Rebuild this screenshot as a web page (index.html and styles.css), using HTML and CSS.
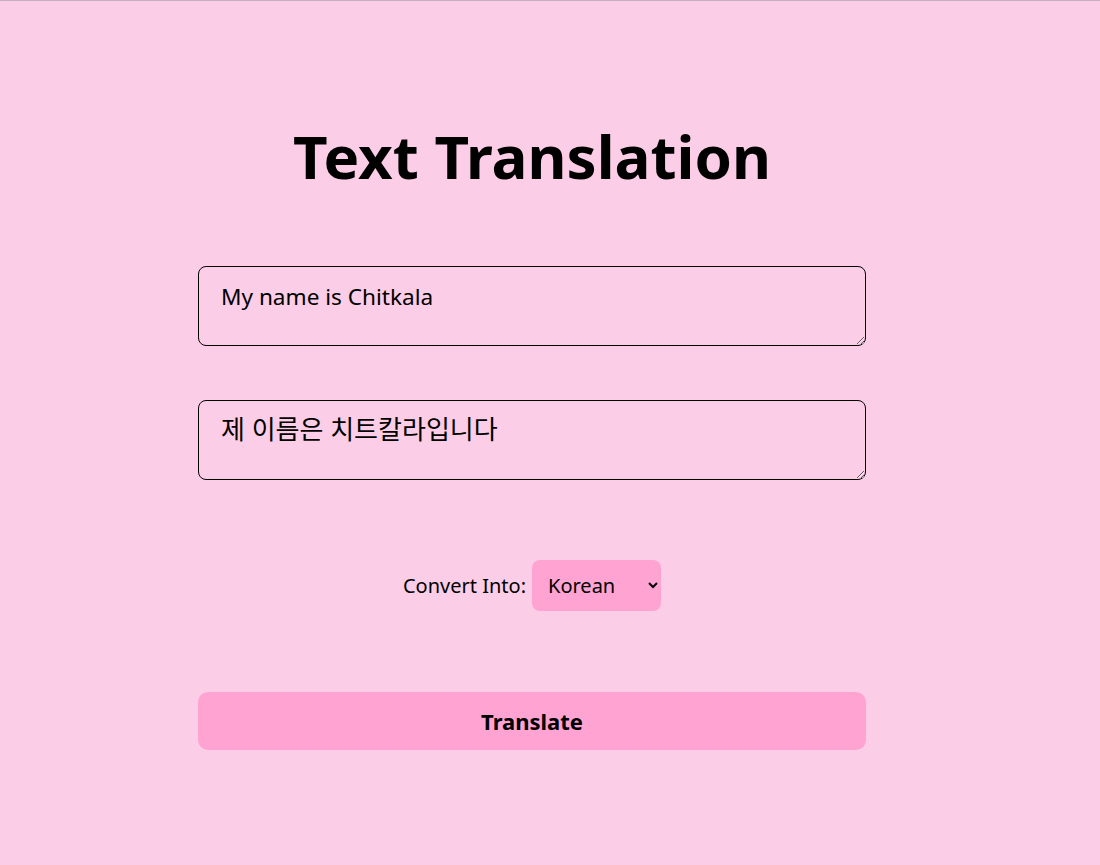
FILE: index.html
```html
<!DOCTYPE html>
<html lang="en">
<head>
<meta charset="utf-8">
<title>Text Translation</title>
<link rel="stylesheet" href="styles.css">
</head>
<body>
<main class="app">
  <h1 class="title">Text Translation</h1>
  <textarea class="box">My name is Chitkala</textarea>
  <textarea class="box box-out">제 이름은 치트칼라입니다</textarea>
  <div class="convert">
    <label class="convert-label" for="lang">Convert Into:</label>
    <select id="lang" class="lang">
      <option>Korean</option>
    </select>
  </div>
  <button class="translate">Translate</button>
</main>
</body>
</html>
```
FILE: styles.css
```css
html {
  background: #fccde6;
}
body {
  margin: 0;
  height: 865px;
  box-sizing: border-box;
  border-top: 1px solid #c4b0bd;
  background: #fccde6;
  font-family: "Noto Sans", "Noto Sans CJK KR", sans-serif;
  color: #000;
}
.app {
  width: 668px;
  margin-left: 198px;
  display: flex;
  flex-direction: column;
}
.title {
  margin: 116px 0 0;
  height: 78px;
  line-height: 78px;
  text-align: center;
  font-size: 60px;
  font-weight: 700;
}
.box {
  margin-top: 71px;
  height: 80px;
  box-sizing: border-box;
  padding: 15px 22px 13px;
  border: 1px solid #000;
  border-radius: 8px;
  background: #fccde6;
  font-family: "Noto Sans", "Noto Sans CJK KR", sans-serif;
  font-size: 22.6px;
  line-height: 30px;
  color: #000;
  resize: vertical;
}
.box-out {
  margin-top: 54px;
  padding-top: 12px;
  font-size: 26px;
  line-height: 33px;
}
.convert {
  margin-top: 80px;
  display: flex;
  justify-content: center;
  align-items: center;
  gap: 6px;
  font-size: 20px;
}
.lang {
  width: 129px;
  height: 51px;
  border: none;
  border-radius: 8px;
  background: #ffa3d2;
  padding: 0 12px;
  font-family: "Noto Sans", sans-serif;
  font-size: 20px;
  color: #000;
}
.translate {
  margin-top: 81px;
  height: 58px;
  border: none;
  border-radius: 10px;
  background: #ffa3d2;
  font-family: "Noto Sans", sans-serif;
  font-size: 22px;
  font-weight: 700;
  color: #000;
}
```
